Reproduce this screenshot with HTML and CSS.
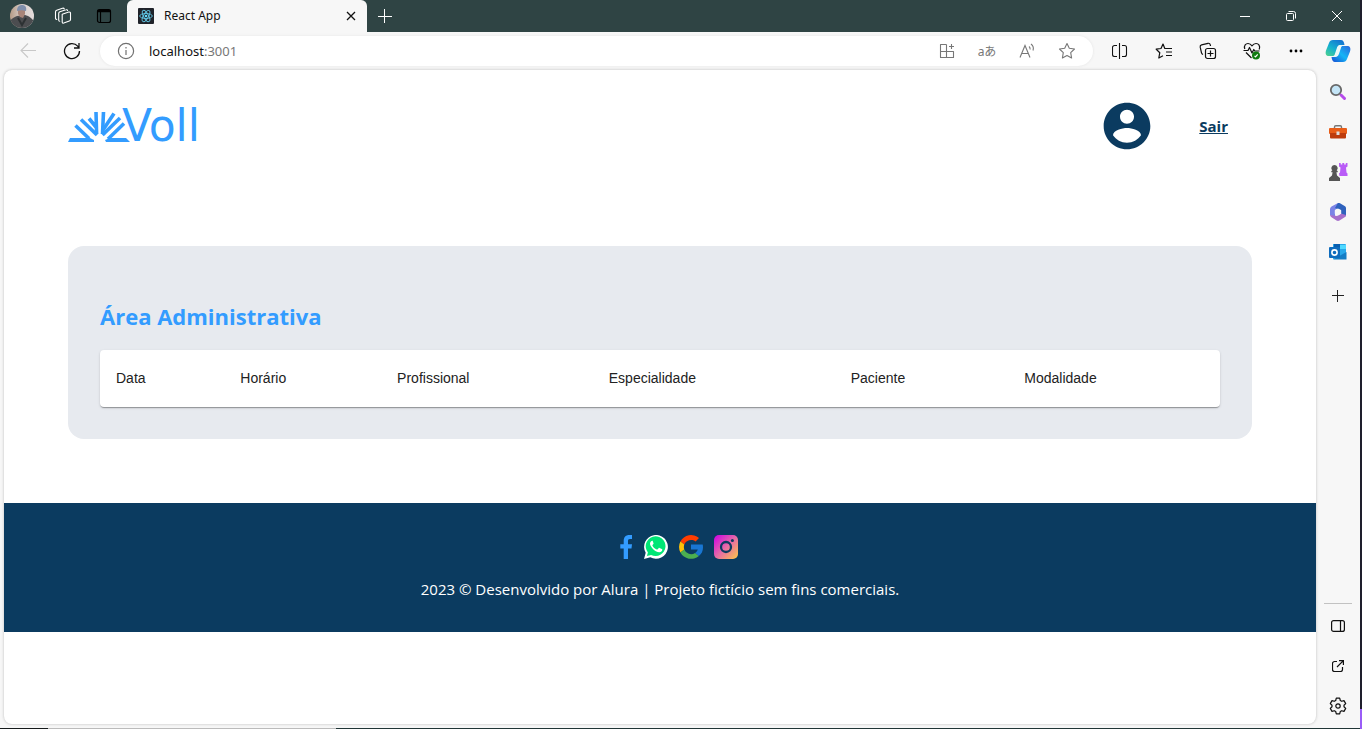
FILE: index.html
```html
<!DOCTYPE html>
<html lang="pt-BR">
<head>
<meta charset="utf-8">
<title>React App</title>
<link rel="stylesheet" href="styles.css">
</head>
<body>
<div class="window">
  <div class="titlebar">
    <button class="tb-btn" aria-label="Perfil">
      <svg width="24" height="24" viewBox="0 0 24 24"><defs><clipPath id="av"><circle cx="12" cy="12" r="12"/></clipPath><linearGradient id="avbg" x1="0" x2="1"><stop offset="0" stop-color="#b59a86"/><stop offset=".5" stop-color="#d9cfca"/><stop offset="1" stop-color="#e4dcdc"/></linearGradient></defs><g clip-path="url(#av)"><path fill="url(#avbg)" d="M0 0h24v24H0z"/><path fill="#4c4d50" d="M0 17c2-3 5-4 7-5l8-1c4 1 8 4 9 7v7H0z"/><path fill="#a88478" d="M8 6h7v4l-2 4-3-1-2-3z"/><path fill="#7f8eab" d="M7 7c0-4 2-6 5-6s5 2 4 6c-3-1-6-1-9 0z"/><path stroke="#2d3133" stroke-width="2" fill="none" d="M8 14l4 7 4-7"/></g></svg>
    </button>
    <button class="tb-btn" aria-label="Espaços de trabalho">
      <svg width="18" height="18" viewBox="0 0 18 18" fill="none" stroke="#fff" stroke-width="1.1" stroke-linejoin="round" stroke-linecap="round"><path d="M8.2 7.2l6.6-2.1c.9-.3 1.7.2 1.7 1v6.3c0 .8-.4 1.4-1.2 1.7l-5.5 2c-.9.3-1.6-.1-1.6-1z"/><path d="M5.7 14.2c-.7 0-1-.5-1-1.200V6.500c0-.8.4-1.400 1.200-1.700l6-2c.8-.3 1.500 0 1.700.7"/><path d="M2.700 12.400c-.7 0-1.200-.4-1.200-1.200V5.100c0-.9.4-1.500 1.200-1.800L8.500 1.300c.9-.3 1.500 0 1.800.7"/></svg>
    </button>
    <button class="tb-btn" aria-label="Menu de guias">
      <svg width="16" height="16" viewBox="0 0 16 16" fill="none" stroke="#000" stroke-width="1.200"><rect x="1.500" y="1.500" width="13" height="13" rx="2"/><path stroke-width="2.500" d="M1.500 3h13"/><path d="M4.500 3v11"/></svg>
    </button>
    <div class="tab">
      <svg width="16" height="16" viewBox="0 0 16 16"><rect width="16" height="16" rx="1" fill="#20232a"/><g fill="none" stroke="#61c6e4" stroke-width=".9"><ellipse cx="8" cy="8" rx="6.300" ry="2.500"/><ellipse cx="8" cy="8" rx="6.300" ry="2.500" transform="rotate(60 8 8)"/><ellipse cx="8" cy="8" rx="6.300" ry="2.500" transform="rotate(120 8 8)"/></g><circle cx="8" cy="8" r="1.300" fill="#61dafb"/></svg>
      <span class="tab-title">React App</span>
      <button class="tab-close" aria-label="Fechar guia"><svg width="10" height="10" viewBox="0 0 10 10" stroke="#111" stroke-width="1.300"><path d="M1 1l8 8M9 1l-8 8"/></svg></button>
    </div>
    <button class="newtab" aria-label="Nova guia"><svg width="14" height="14" viewBox="0 0 14 14" stroke="#fff"><path d="M6.500 0v14M0 7.500h14"/></svg></button>
    <div class="win-controls">
      <button aria-label="Minimizar"><svg width="10" height="10" viewBox="0 0 10 10" stroke="#fff"><path d="M0 5.500h10"/></svg></button>
      <button aria-label="Restaurar"><svg width="10" height="10" viewBox="0 0 10 10" fill="none" stroke="#fff"><rect x=".5" y="2.500" width="7" height="7" rx="1"/><path d="M2.500.5h5a2 2 0 0 1 2 2v5"/></svg></button>
      <button aria-label="Fechar"><svg width="10" height="10" viewBox="0 0 10 10" stroke="#fff"><path d="M0 0l10 10M10 0L0 10"/></svg></button>
    </div>
  </div>

  <div class="toolbar">
    <button class="tool" aria-label="Voltar"><svg width="16" height="16" viewBox="0 0 16 16" fill="none" stroke="#c8c8c8" stroke-width="1.100"><path d="M16 7.500H1M8 .5l-7 7 7 7"/></svg></button>
    <button class="tool" aria-label="Atualizar"><svg width="18" height="18" viewBox="0 0 18 18" fill="none" stroke="#111" stroke-width="1.300"><path d="M16.500 9A7.500 7.500 0 1 1 14.700 4.200L16 6M16 1v5h-5"/></svg></button>
    <div class="address">
      <svg class="info" width="18" height="18" viewBox="0 0 18 18" fill="none" stroke="#717171" stroke-width="1.200"><circle cx="9" cy="9" r="7.600"/><path d="M9 8v5M9 5v1.400"/></svg>
      <div class="url">localhost<span class="port">:3001</span></div>
      <button aria-label="Aplicativos"><svg width="16" height="16" viewBox="0 0 16 16" fill="none" stroke="#777" stroke-width="1.100"><path d="M7.500 1.500h-6v13h13v-6h-13M7.500 1.500v13M12.500 1v5M10 3.500h5" stroke-linejoin="round"/></svg></button>
      <button class="glyph" aria-label="Traduzir">aあ</button>
      <button aria-label="Ler em voz alta"><svg width="16" height="16" viewBox="0 0 16 16" fill="none" stroke="#777" stroke-width="1.100"><path d="M1 14.500L6 2.500l5 12M2.700 10.500h6.600M10 3.500c1 .8 1.300 2 1 3M12 1c2 1.500 2.800 4 2 6.500"/></svg></button>
      <button aria-label="Favoritar"><svg width="18" height="18" viewBox="0 0 18 18" fill="none" stroke="#777" stroke-width="1.100" stroke-linejoin="round"><path d="M9 1.500l2.300 4.800 5.200.7-3.800 3.700.9 5.300L9 13.500 4.400 16l.9-5.300L1.500 7l5.200-.7z"/></svg></button>
    </div>
    <button class="tool" aria-label="Dividir tela"><svg width="16" height="16" viewBox="0 0 16 16" fill="none" stroke="#111" stroke-width="1.100"><path d="M7.500 0v16M5 2.500H2.500a2 2 0 0 0-2 2v7a2 2 0 0 0 2 2H5M10 2.500h2.500a2 2 0 0 1 2 2v7a2 2 0 0 1-2 2H10"/></svg></button>
    <button class="tool" aria-label="Favoritos"><svg width="18" height="18" viewBox="0 0 18 18" fill="none" stroke="#111" stroke-width="1.200" stroke-linejoin="round"><path d="M11 6.500H9.800L8 2 6 6.500 1.200 7.200l3.600 3.500-1 5.300L8 13.800M11 6.500h6M11 10h6M11 13.500h6"/></svg></button>
    <button class="tool" aria-label="Coleções"><svg width="18" height="18" viewBox="0 0 18 18" fill="none" stroke="#111" stroke-width="1.200"><rect x="6.500" y="6.500" width="10" height="10" rx="2"/><path d="M11.500 8.500v6M8.500 11.500h6M4 12.500c-.8-.3-1.300-.9-1.500-1.700L1.200 5.200c-.2-1 .4-2 1.400-2.300L9 1.300c1.200-.2 2 .3 2.300 1.500l.2 1.200"/></svg></button>
    <button class="tool" aria-label="Desempenho"><svg width="18" height="18" viewBox="0 0 18 18" fill="none" stroke="#111" stroke-width="1.200" stroke-linejoin="round"><path d="M1.800 7C.5 3.500 3 1.500 5 1.500c2 0 3.200 1.200 4 2.300 1-1.300 2.200-2.300 4-2.300 2.500 0 4.600 2.500 3.200 6M.5 8.500H5l1.500-3L9 11l1.800-3.500 1 1.500h4.700M3 10.500l5.500 5.500"/><circle cx="13" cy="13.500" r="4" fill="#107c10" stroke="none"/><path stroke="#fff" d="M11.500 13.800l1 1 2.200-2.500"/></svg></button>
    <button class="tool" aria-label="Configurações e mais"><svg width="14" height="4" viewBox="0 0 14 4"><circle cx="2" cy="2" r="1.400"/><circle cx="7" cy="2" r="1.400"/><circle cx="12" cy="2" r="1.400"/></svg></button>
    <button class="tool copilot" aria-label="Copilot"><svg width="26" height="24" viewBox="0 0 26 24"><defs><linearGradient id="ca" x1="0" y1="1" x2=".7" y2="0"><stop offset="0" stop-color="#50d28b"/><stop offset=".5" stop-color="#14b1cf"/><stop offset="1" stop-color="#1476d2"/></linearGradient><linearGradient id="cb" x1="0" y1="1" x2="1" y2="0"><stop offset="0" stop-color="#174bd2"/><stop offset=".5" stop-color="#13b5f6"/><stop offset="1" stop-color="#2b65db"/></linearGradient></defs><path fill="url(#ca)" d="M8 1h8c2 0 3 1.500 3.500 5h-4c-2 0-3 1-3.600 3l-2 6c-.4 1.500-1 2-2.500 2H4c-3 0-4-2-3-5.500L4 4c.6-2 2-3 4-3z"/><path fill="url(#cb)" d="M18 23h-8c-2 0-3-1.500-3.500-5h3c2 0 3-1 3.600-3l2.200-6c.5-1.500 1.200-2 2.700-2h4c3 0 4 2 3 5.500L22 20c-.6 2-2 3-4 3z"/><path fill="#e9f8f7" d="M13 7.500c.5-1 1.500-1.500 3-1.500h2c-1 .4-1.600 1.500-2 2.700l-2 6c-.7 2.200-2 3.300-4.500 3.300l1-2.500z"/></svg></button>
  </div>

  <div class="content">
    <div class="page">
      <header class="site-header">
        <a class="logo" href="#" aria-label="Voll">
          <svg width="62" height="32" viewBox="0 0 62 32" fill="none" stroke="#339cff" stroke-width="3.600"><path fill="#339cff" stroke="none" d="M2 28h20l4 2v2H0z"/><path d="M7.500 15.500L21 28.500"/><path d="M13 9.500l16 15.500"/><path d="M21 8.500l7 8.500M28 2l.6 22"/><path d="M35.500 2L34.500 24"/><path d="M46 3.500L35 20"/><path d="M52 8L34.500 25"/><path d="M56 13.500L40 29"/><path fill="#339cff" stroke="none" d="M42 28h16l4 4H38l-1-2z"/></svg>
          <span class="wordmark">Voll</span>
        </a>
        <nav class="account">
          <svg width="56" height="56" viewBox="0 0 24 24" fill="#0b3b60"><path d="M12 2C6.480 2 2 6.480 2 12s4.480 10 10 10 10-4.480 10-10S17.520 2 12 2zm0 3c1.660 0 3 1.340 3 3s-1.340 3-3 3-3-1.340-3-3 1.340-3 3-3zm0 14.200c-2.500 0-4.710-1.280-6-3.220.03-1.990 4-3.080 6-3.080 1.990 0 5.970 1.090 6 3.080-1.290 1.940-3.500 3.220-6 3.220z"/></svg>
          <a class="logout" href="#">Sair</a>
        </nav>
      </header>
      <main class="panel">
        <h2>Área Administrativa</h2>
        <table>
          <colgroup><col class="c-date"><col class="c-time"><col class="c-pro"><col class="c-spec"><col class="c-pat"><col></colgroup>
          <thead><tr><th>Data</th><th>Horário</th><th>Profissional</th><th>Especialidade</th><th>Paciente</th><th>Modalidade</th></tr></thead>
        </table>
      </main>
      <footer class="site-footer">
        <ul class="social">
          <li><a href="#" aria-label="Facebook"><svg width="13" height="24" viewBox="0 0 13 24"><path fill="#339cff" d="M3.700 24V13.500H.3V9.200h3.400V6C3.700 2 5.800 0 9.300 0H12v4.100h-2c-1.600 0-2 .8-2 2v3.100h4l-.5 4.300H8V24z"/></svg></a></li>
          <li><a href="#" aria-label="WhatsApp"><svg width="24" height="24" viewBox="0 0 24 24"><path fill="#fff" d="M0 24l1.700-6.200A11.900 11.900 0 1 1 6.300 22.300z"/><path fill="#00e676" d="M2.900 21.100l1-3.700A9.900 9.900 0 1 1 7.100 20z"/><path fill="#fff" d="M8.900 6.400c-.3-.6-.5-.6-1.100-.5-1 .2-1.800 1.300-1.800 2.700 0 1.200.6 2.500 2.100 4.300 2.400 2.900 5 4.400 7.300 4.400 1.500 0 2.800-1 2.900-2.500 0-.5 0-.6-.5-.8l-2.300-1.100c-.4-.2-.6-.1-.9.300l-.9 1.100c-.2.300-.5.300-1 .1-2-.9-3.200-2-4.200-3.700-.2-.4-.1-.6.2-.9l.7-.8c.2-.3.2-.5.100-.8z"/></svg></a></li>
          <li><a href="#" aria-label="Google"><svg width="24" height="24" viewBox="0 0 24 24"><path fill="#ff3d00" d="M1.400 6.600A12 12 0 0 1 20 3.100l-3.400 3.400A7.200 7.200 0 0 0 5.300 9.600z"/><path fill="#ffc107" d="M1.400 6.600l3.900 3a7.200 7.200 0 0 0 0 4.800l-3.900 3a12 12 0 0 1 0-10.800z"/><path fill="#4caf50" d="M1.400 17.400l3.900-3a7.200 7.200 0 0 0 10.800 3.500l3.800 3A12 12 0 0 1 1.400 17.400z"/><path fill="#1976d2" d="M12 9.600h11.700c1 4.800-.6 8.900-3.800 11.300l-3.800-3c1.300-.8 2.200-2 2.700-3.500H12z"/></svg></a></li>
          <li><a href="#" aria-label="Instagram"><svg width="24" height="24" viewBox="0 0 24 24"><defs><linearGradient id="ig" x1="0" y1="0" x2="1" y2="1"><stop offset="0" stop-color="#cc00e5"/><stop offset=".5" stop-color="#e66aa7"/><stop offset="1" stop-color="#ffc947"/></linearGradient></defs><rect width="24" height="24" rx="5" fill="url(#ig)"/><circle cx="12" cy="12" r="5" fill="none" stroke="#0b3b60" stroke-width="2.300"/><circle cx="18.400" cy="5.600" r="1.500" fill="#0b3b60"/></svg></a></li>
        </ul>
        <p>2023 © Desenvolvido por Alura | Projeto fictício sem fins comerciais.</p>
      </footer>
    </div>
    <aside class="sidebar">
      <button aria-label="Pesquisar"><svg width="18" height="18" viewBox="0 0 18 18"><path stroke="#b54bea" stroke-width="3" stroke-linecap="round" d="M12 12l3.500 3.500"/><circle cx="7" cy="7" r="5.200" fill="#c4e5f7" stroke="#686868" stroke-width="1.800"/></svg></button>
      <button aria-label="Compras"><svg width="18" height="18" viewBox="0 0 18 18"><path fill="none" stroke="#777" stroke-width="1.400" d="M5.500 6V4c0-.8.400-1.200 1.200-1.200h4.600c.8 0 1.200.4 1.200 1.200v2"/><rect y="5" width="18" height="6" rx="1" fill="#e85d18"/><path fill="#bd3c0d" d="M1 10h16v4.500a1 1 0 0 1-1 1H2a1 1 0 0 1-1-1z"/><rect x="7.500" y="8.500" width="3" height="3.500" fill="#ddd"/></svg></button>
      <button aria-label="Jogos"><svg width="20" height="18" viewBox="0 0 20 18"><path fill="#b95cf7" d="M11 0h1.700v1.500h1.600V0h1.900v1.500h1.600V0h1.700v3.500l-1.500 1 .5 5 1 1V13h-8l-.5-2.500 1-1 .5-5-1.500-1z"/><path fill="#555" d="M6.500 2a3.200 3.200 0 0 1 2.200 5.500l1 .5v1.200H8.400l.6 3.300 3 2.500v3H1v-3l3-2.500.6-3.300H3.300V8l1-.5A3.200 3.200 0 0 1 6.500 2z"/></svg></button>
      <button aria-label="Microsoft 365"><svg width="18" height="18" viewBox="0 0 18 18"><path fill="#7b83e6" d="M9 0L2.500 3.500Q1 4.500 1 6v6l5 2.500V7l6-4z"/><path fill="#2f62bd" d="M9 0q1-.3 2 .3l5 3q1 .7 1 2V12q0 1-1 1.600L12 11V7L6 5z"/><path fill="#a66fcb" d="M1 12q.2 1.500 1.500 2.300L7.500 17.500q1.500.8 3 0l5.500-3.500q1-.7 1-2l-5-1.500-4 2.500z"/><path fill="#f7f7f7" d="M9 5.500l3.200 1.800v3.500L9 12.600l-3.200-1.800V7.300z"/></svg></button>
      <button aria-label="Outlook"><svg width="18" height="18" viewBox="0 0 18 18"><path fill="#28a8ea" d="M4 1h12a1 1 0 0 1 1 1v14H4z"/><path fill="#0a5fb0" d="M5 1h6v5H5z"/><path fill="#50d9ff" d="M11 6h6V2H11z"/><path fill="#147dc5" d="M4 16.500L17.500 9v7.500z"/><rect y="4" width="11" height="11" rx="1" fill="#0f6cbd"/><circle cx="5.500" cy="9.500" r="2.600" fill="none" stroke="#fff" stroke-width="1.600"/></svg></button>
      <button class="add" aria-label="Personalizar"><svg width="12" height="12" viewBox="0 0 12 12" stroke="#222"><path d="M5.500 0v12M0 5.500h12"/></svg></button>
      <div class="side-bottom">
        <button aria-label="Ocultar barra lateral"><svg width="14" height="12" viewBox="0 0 14 12" fill="none" stroke="#111" stroke-width="1.200"><rect x=".6" y=".6" width="12.800" height="10.800" rx="2"/><path d="M9.500 1v10"/></svg></button>
        <button aria-label="Abrir em nova janela"><svg width="12" height="12" viewBox="0 0 12 12" fill="none" stroke="#111" stroke-width="1.200"><path d="M5 1.500H2.500a2 2 0 0 0-2 2v6a2 2 0 0 0 2 2h6a2 2 0 0 0 2-2V7M7 .6h4.400V5M11.400.6L5 7"/></svg></button>
        <button aria-label="Configurações"><svg width="18" height="18" viewBox="0 0 18 18" fill="none" stroke="#111" stroke-width="1.200" stroke-linejoin="round"><path d="M7.300 1.200h3.400l.6 2.300 1.400.8 2.300-.7 1.700 3-1.700 1.600v1.600l1.700 1.600-1.700 3-2.300-.7-1.400.8-.6 2.300H7.300l-.6-2.300-1.400-.8-2.300.7-1.700-3L3 9.800V8.200L1.300 6.600l1.700-3 2.300.7 1.400-.8z"/><circle cx="9" cy="9" r="2.200"/></svg></button>
      </div>
    </aside>
  </div>
  <div class="bottom-edge"></div>
</div>
<div class="desktop-edge"></div>
</body>
</html>
```
FILE: styles.css
```css
* { box-sizing: border-box; }
body { margin: 0; display: flex; min-height: 100vh; background: #1e1e2c; font-family: "Open Sans", "Noto Sans", sans-serif; font-size: 15px; }
button { border: 0; padding: 0; background: none; font: inherit; display: flex; align-items: center; justify-content: center; }
svg { display: block; flex: none; }
.window { flex: 1; display: flex; flex-direction: column; background: #f7f7f7; min-width: 0; }
.desktop-edge { width: 2px; background: linear-gradient(to top, #9a5cf7 20px, #1e1e2c 20px); }

.titlebar { display: flex; height: 32px; background: #2f4444; padding-left: 1px; }
.tb-btn { width: 41px; }
.tab { display: flex; align-items: center; width: 240px; margin-left: 3px; padding: 0 10px 0 11px; background: #f7f7f7; border-radius: 6px 6px 0 0; font-family: "Noto Sans", sans-serif; color: #111; }
.tab-title { flex: 1; padding-left: 10px; font-size: 12px; line-height: 16px; padding-bottom: 1px; }
.tab-close { width: 12px; height: 20px; }
.newtab { width: 36px; }
.win-controls { display: flex; margin-left: auto; }
.win-controls button { width: 46px; }

.toolbar { display: flex; height: 38px; padding: 4px 2px 4px 6px; }
.tool { width: 44px; }
.copilot { width: 40px; }
.address { flex: 1; display: flex; align-items: center; margin: 0 5px 0 6px; padding: 0 6px 0 17px; background: #fff; border-radius: 15px; box-shadow: 0 0 3px #e4e4e4; }
.address button { width: 40px; height: 28px; }
.address .glyph { font-family: "Noto Sans", "Noto Sans CJK JP", sans-serif; font-size: 12px; color: #777; }
.url { flex: 1; padding-left: 14px; font-family: "Noto Sans", sans-serif; font-size: 13px; color: #111; }
.port { color: #777; }

.content { flex: 1; display: flex; padding-left: 4px; }
.page { flex: 1; margin-bottom: 4px; background: #fff; border-radius: 8px; box-shadow: 0 0 3px #bbb; overflow: hidden; }
.site-header { display: flex; align-items: center; justify-content: space-between; height: 112px; padding: 0 88px 0 64px; }
.logo { display: flex; align-items: center; color: #339cff; text-decoration: none; }
.wordmark { margin-left: -8px; font-family: "DejaVu Sans", sans-serif; font-size: 44px; line-height: 32px; }
.account { display: flex; align-items: center; gap: 44px; }
.logout { color: #0b3b60; font-weight: 700; }
.panel { margin: 64px; padding: 32px; background: #e7eaef; border-radius: 16px; }
.panel h2 { margin: 20px 0 16px; font-size: 22px; line-height: 36px; color: #339cff; }
table { width: 100%; height: 57px; table-layout: fixed; border-collapse: collapse; background: #fff; border-radius: 4px; box-shadow: 0 2px 1px -1px rgba(0,0,0,.2), 0 1px 1px rgba(0,0,0,.14), 0 1px 3px rgba(0,0,0,.12); }
th { padding: 0 16px 1px; text-align: left; font-family: "Liberation Sans", Arial, sans-serif; font-size: 14px; font-weight: 400; color: #222; }
.c-date { width: 11.1%; }
.c-time { width: 14%; }
.c-pro { width: 18.9%; }
.c-spec { width: 21.6%; }
.c-pat { width: 15.5%; }
.site-footer { padding: 32px; background: #0b3b60; color: #fff; text-align: center; }
.social { display: flex; justify-content: center; gap: 11px; margin: 0 0 20px; padding: 0 0 0 38px; list-style: none; }
.site-footer p { margin: 0; line-height: 21px; }

.sidebar { width: 44px; display: flex; flex-direction: column; align-items: center; padding-top: 2px; }
.sidebar button { width: 40px; height: 40px; }
.sidebar .add { margin-top: 4px; }
.side-bottom { margin-top: auto; border-top: 1px solid #c2c2c2; width: 28px; display: flex; flex-direction: column; align-items: center; padding: 2px 0; }
.bottom-edge { height: 1px; background: linear-gradient(to right, #151a1b 48px, #bbb 48px, #bbb 336px, #203536 336px); }
```
